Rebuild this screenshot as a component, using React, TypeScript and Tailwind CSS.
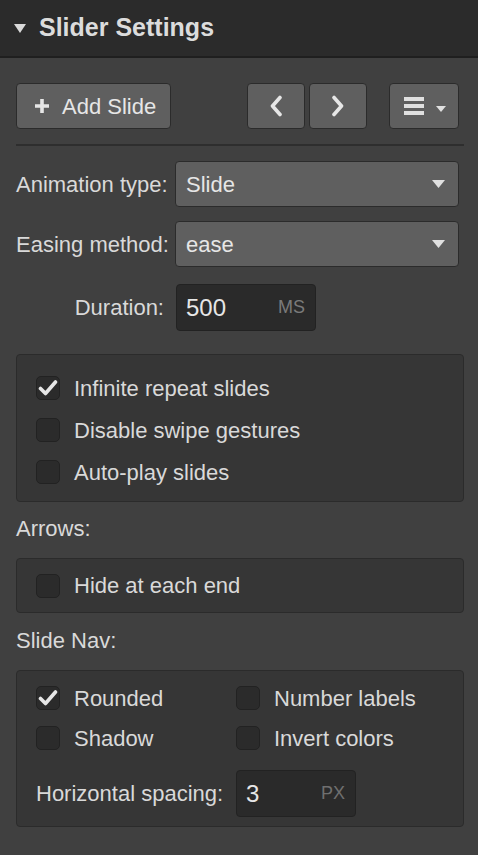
import React from "react";

const font = { fontFamily: '"Liberation Sans", Arial, sans-serif' };

function Check({ checked }: { checked?: boolean }) {
  return (
    <div className="w-[24px] h-[24px] rounded-[5px] bg-[#2b2b2b] border border-[#222222] flex items-center justify-center shrink-0">
      {checked && (
        <svg width="20" height="18" viewBox="0 0 20 18">
          <path d="M2.5 9.5 L7.5 14.5 L17.5 3" fill="none" stroke="#e6e6e6" strokeWidth="3.6" strokeLinecap="round" strokeLinejoin="round" />
        </svg>
      )}
    </div>
  );
}

function CheckRow({ label, checked }: { label: string; checked?: boolean }) {
  return (
    <div className="flex items-center gap-[14px] h-[42px]">
      <Check checked={checked} />
      <span>{label}</span>
    </div>
  );
}

function Caret() {
  return (
    <svg width="13" height="8" viewBox="0 0 13 8">
      <path d="M0 0 H13 L6.5 8 Z" fill="#e0e0e0" />
    </svg>
  );
}

function Select({ value }: { value: string }) {
  return (
    <div className="flex-1 h-[46px] rounded-[4px] bg-[#5f5f5f] border border-[#2b2b2b] flex items-center justify-between pl-[10px] pr-[13px]">
      <span className="text-[#e6e6e6]">{value}</span>
      <Caret />
    </div>
  );
}

export default function App() {
  return (
    <div className="w-[478px] h-[855px] bg-[#404040] text-[#d9d9d9] text-[22px] overflow-hidden" style={font}>
      <div className="h-[58px] bg-[#2b2b2b] border-b-2 border-[#1f1f1f] flex items-center pl-[14px]">
        <svg width="12" height="9" viewBox="0 0 12 9" className="mr-[13px]">
          <path d="M0 0 H12 L6 9 Z" fill="#d9d9d9" />
        </svg>
        <span className="text-[25px] font-bold text-[#dcdcdc]">Slider Settings</span>
      </div>

      <div className="pl-4 pr-[14px]">
        <div className="flex items-center mt-[25px] h-[46px]">
          <div className="w-[155px] h-[46px] rounded-[4px] bg-[#5f5f5f] border border-[#2b2b2b] flex items-center pl-[17px]">
            <svg width="16" height="16" viewBox="0 0 16 16" className="mr-[12px]">
              <path d="M8 1 V15 M1 8 H15" stroke="#e6e6e6" strokeWidth="3.6" />
            </svg>
            <span className="text-[#e6e6e6]">Add Slide</span>
          </div>
          <div className="ml-[76px] w-[58px] h-[46px] rounded-[4px] bg-[#5f5f5f] border border-[#2b2b2b] flex items-center justify-center">
            <svg width="14" height="22" viewBox="0 0 14 22">
              <path d="M11 2.5 L3.5 11 L11 19.5" fill="none" stroke="#e6e6e6" strokeWidth="3.6" strokeLinecap="round" strokeLinejoin="round" />
            </svg>
          </div>
          <div className="ml-[4px] w-[58px] h-[46px] rounded-[4px] bg-[#5f5f5f] border border-[#2b2b2b] flex items-center justify-center">
            <svg width="14" height="22" viewBox="0 0 14 22">
              <path d="M3 2.5 L10.5 11 L3 19.5" fill="none" stroke="#e6e6e6" strokeWidth="3.6" strokeLinecap="round" strokeLinejoin="round" />
            </svg>
          </div>
          <div className="ml-[22px] w-[70px] h-[46px] rounded-[4px] bg-[#5f5f5f] border border-[#2b2b2b] flex items-center pl-[14px]">
            <svg width="20" height="20" viewBox="0 0 20 20">
              <path d="M0 3 H20 M0 10 H20 M0 17 H20" stroke="#e0e0e0" strokeWidth="4" />
            </svg>
            <svg width="10" height="6" viewBox="0 0 10 6" className="ml-[12px] mt-[6px]">
              <path d="M0 0 H10 L5 6 Z" fill="#e0e0e0" />
            </svg>
          </div>
        </div>

        <div className="mt-[15px] h-[2px] bg-[#2e2e2e]" />

        <div className="mt-[15px] flex items-center pr-[5px]">
          <span className="w-[159px] shrink-0">Animation type:</span>
          <Select value="Slide" />
        </div>
        <div className="mt-[14px] flex items-center pr-[5px]">
          <span className="w-[159px] shrink-0">Easing method:</span>
          <Select value="ease" />
        </div>
        <div className="mt-[17px] flex items-center">
          <span className="w-[148px] shrink-0 text-right">Duration:</span>
          <div className="ml-[12px] w-[140px] h-[47px] rounded-[4px] bg-[#2a2a2a] border border-[#222222] flex items-center justify-between pl-[9px] pr-[10px]">
            <span className="text-[24px] text-[#e6e6e6]">500</span>
            <span className="text-[18px] text-[#7a7a7a]">MS</span>
          </div>
        </div>

        <div className="mt-[23px] h-[148px] rounded-[4px] bg-[#363636] border border-[#2b2b2b] px-[19px] pt-[12px]">
          <CheckRow label="Infinite repeat slides" checked />
          <CheckRow label="Disable swipe gestures" />
          <CheckRow label="Auto-play slides" />
        </div>

        <div className="mt-[14px] h-[24px] flex items-center">Arrows:</div>
        <div className="mt-[18px] h-[55px] rounded-[4px] bg-[#363636] border border-[#2b2b2b] px-[19px] flex items-center">
          <div className="flex items-center gap-[14px]">
            <Check />
            <span>Hide at each end</span>
          </div>
        </div>

        <div className="mt-[15px] h-[24px] flex items-center">Slide Nav:</div>
        <div className="mt-[18px] h-[157px] rounded-[4px] bg-[#363636] border border-[#2b2b2b] px-[19px] pt-[7px]">
          <div className="grid grid-cols-[200px_1fr]">
            <div className="flex items-center gap-[14px] h-[40px]">
              <Check checked />
              <span>Rounded</span>
            </div>
            <div className="flex items-center gap-[14px] h-[40px]">
              <Check />
              <span>Number labels</span>
            </div>
            <div className="flex items-center gap-[14px] h-[40px]">
              <Check />
              <span>Shadow</span>
            </div>
            <div className="flex items-center gap-[14px] h-[40px]">
              <Check />
              <span>Invert colors</span>
            </div>
          </div>
          <div className="mt-[12px] flex items-center">
            <span className="w-[200px] shrink-0">Horizontal spacing:</span>
            <div className="w-[120px] h-[47px] rounded-[4px] bg-[#2a2a2a] border border-[#222222] flex items-center justify-between pl-[9px] pr-[10px]">
              <span className="text-[24px] text-[#e6e6e6]">3</span>
              <span className="text-[18px] text-[#6f6f6f]">PX</span>
            </div>
          </div>
        </div>
      </div>
    </div>
  );
}
